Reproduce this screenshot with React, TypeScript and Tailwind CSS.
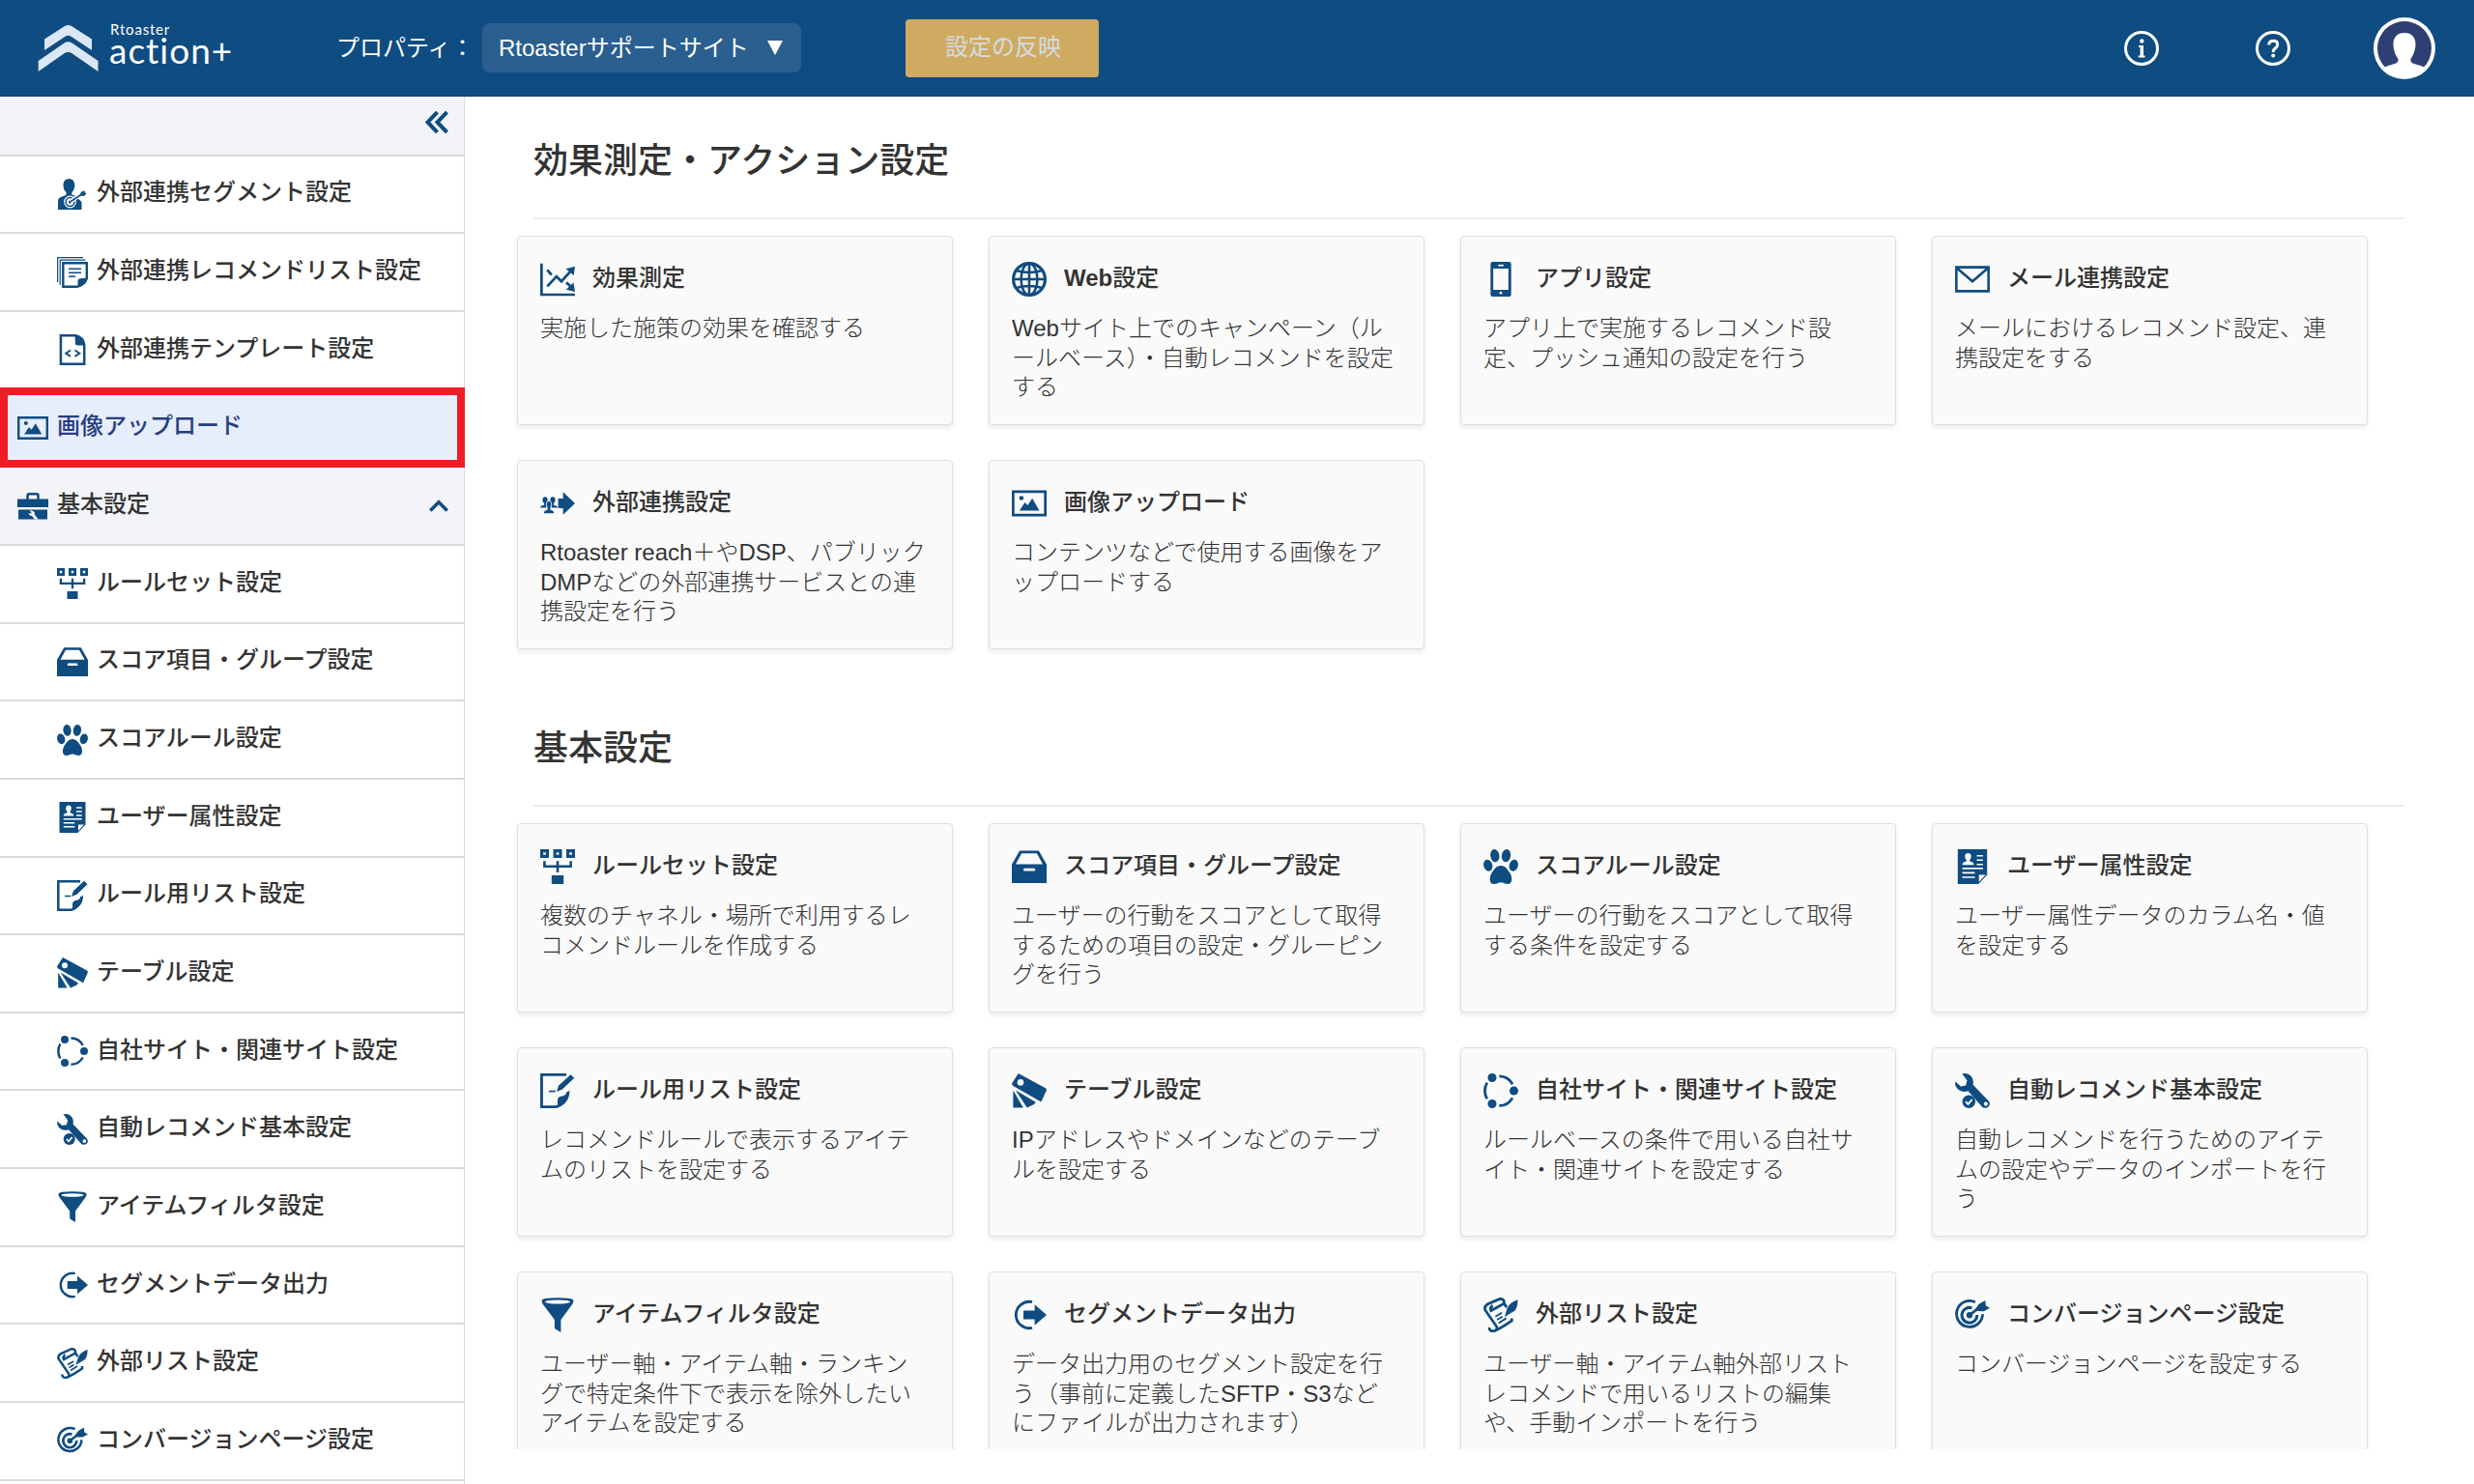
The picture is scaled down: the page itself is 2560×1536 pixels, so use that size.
import type { ReactNode } from 'react'

type IconName =
  | 'segment' | 'docs' | 'template' | 'image' | 'toolbox' | 'ruleset' | 'drawer' | 'paw'
  | 'profile' | 'edit' | 'tags' | 'sites' | 'wrench' | 'funnel' | 'export' | 'scroll'
  | 'target' | 'chart' | 'globe' | 'phone' | 'mail' | 'share'

const icons: Record<IconName, ReactNode> = {
  segment: (
    <>
      <path d="M12.4 0C8.8 0 6.5 2.8 6.5 6.4c0 3.4 1.2 6 3 7.6v2.6c-1 1.3-4 1.5-6.5 2.8C.8 20.5 1 22.5 1 25v7h24.5v-8l-7-6.4c-1.5-.6-2.7-.6-3.2-1.3V14c1.8-1.7 3-4.2 3-7.6C18.3 2.8 16 0 12.4 0z" />
      <circle cx="13.5" cy="24" r="6.4" fill="#fff" />
      <circle cx="13.5" cy="24" r="4.4" fill="none" stroke="currentColor" strokeWidth="1.5" />
      <circle cx="13.5" cy="24" r="1.7" />
      <path d="M13.5 24 27 14.5" stroke="#fff" strokeWidth="4" />
      <path d="M13.5 24 28 14.5" stroke="currentColor" strokeWidth="1.6" />
      <path d="M23.5 17.2 25 13.5 29 12.5 28.8 14.5 30.5 15.2 28 18z" />
    </>
  ),
  docs: (
    <>
      <path d="M.6 26V.6H27M3.2 29V3.2H29.5" fill="none" stroke="currentColor" strokeWidth="1.2" />
      <path d="M6.3 6.3h24.5V22q-2 7-10 8.7H6.3z" fill="none" stroke="currentColor" strokeWidth="2.4" />
      <path d="M21.5 31.5V25q0-2.5 2.5-2.8l7.5-.5q-1.5 7.5-10 9.8z" />
      <path d="M12 12.3h13M12 16.3h13M12 20.3h7" stroke="currentColor" strokeWidth="1.6" />
    </>
  ),
  template: (
    <>
      <path d="M3.9 1.3h15.5Q27 3 28.2 11v19.7H3.9z" fill="none" stroke="currentColor" strokeWidth="2.5" />
      <path d="M18.5.5q8.500 1 10.500 11h-7.500q-3 0-2.600-3z" />
      <path d="M14 16.5 9.2 19.7l4.8 3.2M18.5 16.5l4.8 3.2-4.8 3.2" fill="none" stroke="currentColor" strokeWidth="1.9" />
    </>
  ),
  image: (
    <>
      <path d="M1.2 5.2h29.6v21.6H1.2z" fill="none" stroke="currentColor" strokeWidth="2.4" />
      <circle cx="8.8" cy="11" r="2" />
      <path d="M7 22.6 12 15l2.6 2.7 4.2-6.4 6.5 11.3z" />
    </>
  ),
  toolbox: (
    <>
      <path d="M10.5 9V5q0-1.7 1.7-1.7h7.6q1.7 0 1.7 1.7v4" fill="none" stroke="currentColor" strokeWidth="2.5" />
      <path d="M0 8.5h32V17H0zM1 19.5h30v10H1z" />
      <path d="M12.5 20.5q3-.8 5 1.5.8 1.5.2 2.5l4 5h-4l-2.6-3.600q-3 0-3.600-3l2.600.9.300-1.600z" fill="#f2f4f8" />
    </>
  ),
  ruleset: (
    <>
      <path d="M1.4 1.4h5.2v5.2H1.4zM13.4 1.4h5.2v5.2h-5.2zM25.4 1.4h5.2v5.2h-5.2z" fill="none" stroke="currentColor" strokeWidth="2.8" />
      <path d="M3.9 10.8v5h24.2v-5M16 10.8v10.5" fill="none" stroke="currentColor" strokeWidth="2.3" />
      <path d="M10.5 24h11v8h-11z" />
    </>
  ),
  drawer: (
    <>
      <path fillRule="evenodd" d="M0 14 7.2 1.3h17.6L32 14v17H0zM3.5 13.7h25L23 3.8H9z" />
      <rect x="10.7" y="17.5" width="10.8" height="2.6" rx="1.3" fill="#fff" />
    </>
  ),
  paw: (
    <>
      <ellipse cx="10.5" cy="5.9" rx="4.1" ry="5.9" transform="rotate(-8 10.5 5.9)" />
      <ellipse cx="20.9" cy="5.9" rx="4.1" ry="5.9" transform="rotate(8 20.9 5.9)" />
      <ellipse cx="4.2" cy="14.8" rx="4" ry="5.4" transform="rotate(-16 4.2 14.8)" />
      <ellipse cx="27.8" cy="14.8" rx="4" ry="5.4" transform="rotate(16 27.8 14.8)" />
      <path d="M16 15c-4.500 0-6.500 4-8.500 7S4.800 32 9.500 32c3 0 4-1.600 6.500-1.600S19.500 32 22.500 32c4.700 0 4-7 2-10s-4-7-8.500-7z" />
    </>
  ),
  profile: (
    <>
      <path d="M2.5 0h27v23.5L21.5 32h-19z" />
      <path d="M12 3.5c-3.400 0-3.600 4.200-1.500 6.500v1.200c-2 .6-3.800.8-3.800 3.300h10.600c0-2.500-1.800-2.700-3.800-3.300V10c2.100-2.300 1.900-6.500-1.500-6.500z" fill="#fff" />
      <path d="M20 6h5.7M20 10h5.7M20 14h5.7M6.7 17.7h19M6.7 21.7h11.5M6.7 25.8h11.5" stroke="#fff" strokeWidth="1.5" />
      <path d="M22 30v-6.5h6z" fill="#fff" />
    </>
  ),
  edit: (
    <>
      <path d="M24 1.3H1.3v29.4H15Q24 27 25.5 17" fill="none" stroke="currentColor" strokeWidth="2.5" />
      <path d="M16 31.5v-7q0-2.5 2.5-3.2 6-1 8.5-6.3Q27.5 27 16 31.5z" />
      <path d="M8 16.5h6.5" stroke="currentColor" strokeWidth="1.5" />
      <path d="M14.2 17.8 16.5 11 28 .3 32 4.3 20.5 15.2z" stroke="#fff" strokeWidth="1" />
    </>
  ),
  tags: (
    <>
      <path fillRule="evenodd" d="M6 0 31 13.6Q32.3 14.5 31.7 16L27 26.2 1.2 11.5Q-.2 10.500.2 9zM8 5.3a3 3 0 1 0 0 6 3 3 0 0 0 0-6z" />
      <path d="M1.2 15.5 10.5 31.5H1.2z" />
      <path d="M3.5 15.5 22 26.5 20.5 28.5 14 31.5z" />
    </>
  ),
  sites: (
    <>
      <circle cx="8" cy="4" r="4" />
      <circle cx="28" cy="16" r="4" />
      <circle cx="8" cy="28" r="4" />
      <path d="M14.5 2.5A14 14 0 0 1 26.7 10M26.7 22.5A14 14 0 0 1 14.5 29.7M3.3 8.5A16 16 0 0 0 3.3 23.5" fill="none" stroke="currentColor" strokeWidth="2.5" />
    </>
  ),
  wrench: (
    <>
      <path fillRule="evenodd" d="M6.5.3q6-1 9 3.200 2 3.200 1 7L30.600 25.200q2.400 2.600.4 5.200-2.800 2.600-5.800.6L12 16.300Q3.500 18.500.3 11 0 8.500.3 7.500l5 4.500 4.600-.8 1.200-4.700zM28.300 26.200a1.900 1.900 0 1 0 0 3.800 1.900 1.900 0 0 0 0-3.800z" />
      <circle cx="12.7" cy="26" r="6" />
      <path d="m9.8 26 2.2 2.3 3.7-4.3" fill="none" stroke="#fff" strokeWidth="1.7" />
    </>
  ),
  funnel: (
    <>
      <path d="M1.5 2.7Q2 .3 16 .3t14.500 2.400q.3 1.800-1 3.600L19 20.500V32l-5.800-3.500v-8L2.500 6.300q-1.300-1.800-1-3.600z" />
      <ellipse cx="16" cy="4" rx="11.5" ry="1.8" fill="#fff" />
    </>
  ),
  export: (
    <>
      <path d="M18.7 4.1A12.2 12.2 0 1 0 18.7 27.9" fill="none" stroke="currentColor" strokeWidth="2.5" />
      <path d="M10.7 12H21V6.5L32 16 21 25.5V20H10.7z" />
    </>
  ),
  scroll: (
    <>
      <path d="M5.5 27.5Q5 31 9.5 31 15 29 26 21.5V19M9.5 31Q13.5 30 12 26.5L1.6 11.5Q.5 8 4 6L15 1.2Q19.5 1 19 5.5L7 12Q5.5 9.5 8.5 7.3M19 5.5 21.5 9" fill="none" stroke="currentColor" strokeWidth="2.5" />
      <path d="M11 17.5 17 14M12.5 20.5 17.5 17.5M14 23.5 21 19" stroke="currentColor" strokeWidth="1.6" />
      <path d="M32 1.5Q24 4 21.5 10L19 18.5 29.5 12Q32 8 32 1.5z" stroke="#fff" strokeWidth=".6" />
    </>
  ),
  target: (
    <>
      <path d="M18.6 4.2A12 12 0 1 0 25.4 15.4" fill="none" stroke="currentColor" strokeWidth="2.5" />
      <path d="M15.5 9.6A7 7 0 1 0 20.3 16" fill="none" stroke="currentColor" strokeWidth="2.7" />
      <circle cx="13.3" cy="16.2" r="2.8" />
      <path d="M13.3 16.2 22 9.5" stroke="currentColor" strokeWidth="2.4" />
      <path d="M18.8 10.5 22 6 27.8 2.6 28.4 7.6 32 9.6 26.5 12.6 21 12.4z" />
    </>
  ),
  chart: (
    <>
      <path d="M1.2 1.5v28.7H32" fill="none" stroke="currentColor" strokeWidth="2.4" />
      <path d="M6.5 22.5 15 13.5 19.5 18 29 7.5M6.5 7.5 10.5 12M24 19l5 4.5" fill="none" stroke="currentColor" strokeWidth="2.4" />
      <path d="M23.5 6.5 32 4.2 30.8 12.5zM32 27.5 23.8 25.6 30.6 19z" />
    </>
  ),
  globe: (
    <>
      <circle cx="16" cy="16" r="14.6" fill="none" stroke="currentColor" strokeWidth="2.8" />
      <ellipse cx="16" cy="16" rx="7.5" ry="14.5" fill="none" stroke="currentColor" strokeWidth="2.3" />
      <path d="M16 1v30M1 16h30M4 8q12 3.5 24 0M4 24q12-3.5 24 0" fill="none" stroke="currentColor" strokeWidth="2.3" />
    </>
  ),
  phone: (
    <>
      <path fillRule="evenodd" d="M8.5 0h15Q25.5 0 25.5 2v28q0 2-2 2h-15q-2 0-2-2V2q0-2 2-2zM9 6.3v19.5h14V6.3z" />
      <path d="M13.5 3.3h5" stroke="#fff" strokeWidth="1.5" />
      <circle cx="16" cy="28.6" r="1.2" fill="#fff" />
    </>
  ),
  mail: (
    <path d="M1.2 5h29.6v22H1.2zM1.5 5.5 16 18 30.5 5.5" fill="none" stroke="currentColor" strokeWidth="2.3" />
  ),
  share: (
    <>
      <path d="M16.5 11.5H21V5.5L32 16 21 26.5v-6h-4.5z" />
      <ellipse cx="4.5" cy="12.8" rx="2.3" ry="2.9" />
      <ellipse cx="11.5" cy="12.8" rx="2.3" ry="2.9" />
      <path d="M0 20q0-2 3.5-2.5V14h2v6zM16 20q0-2-3.5-2.5V14h-2v6z" />
      <ellipse cx="8" cy="17" rx="2.5" ry="3.2" stroke="#fafafa" strokeWidth=".7" />
      <path d="M3.4 25q0-2.5 3.3-3v-3h2.6v3q3.3.5 3.3 3z" />
    </>
  ),
}

function Icon({ name, className }: { name: IconName; className: string }) {
  return (
    <svg viewBox="0 0 32 32" fill="currentColor" className={`shrink-0 text-[#0f4c81] ${className}`}>
      {icons[name]}
    </svg>
  )
}

interface MenuItem {
  icon: IconName
  label: string
}

const externalMenu: MenuItem[] = [
  { icon: 'segment', label: '外部連携セグメント設定' },
  { icon: 'docs', label: '外部連携レコメンドリスト設定' },
  { icon: 'template', label: '外部連携テンプレート設定' },
]

const basicMenu: MenuItem[] = [
  { icon: 'ruleset', label: 'ルールセット設定' },
  { icon: 'drawer', label: 'スコア項目・グループ設定' },
  { icon: 'paw', label: 'スコアルール設定' },
  { icon: 'profile', label: 'ユーザー属性設定' },
  { icon: 'edit', label: 'ルール用リスト設定' },
  { icon: 'tags', label: 'テーブル設定' },
  { icon: 'sites', label: '自社サイト・関連サイト設定' },
  { icon: 'wrench', label: '自動レコメンド基本設定' },
  { icon: 'funnel', label: 'アイテムフィルタ設定' },
  { icon: 'export', label: 'セグメントデータ出力' },
  { icon: 'scroll', label: '外部リスト設定' },
  { icon: 'target', label: 'コンバージョンページ設定' },
]

interface CardItem {
  icon: IconName
  title: ReactNode
  lines: string[]
}

const actionCards: CardItem[] = [
  { icon: 'chart', title: '効果測定', lines: ['実施した施策の効果を確認する'] },
  { icon: 'globe', title: <><b>Web</b>設定</>, lines: ['Webサイト上でのキャンペーン（ル', 'ールベース）・自動レコメンドを設定', 'する'] },
  { icon: 'phone', title: 'アプリ設定', lines: ['アプリ上で実施するレコメンド設', '定、プッシュ通知の設定を行う'] },
  { icon: 'mail', title: 'メール連携設定', lines: ['メールにおけるレコメンド設定、連', '携設定をする'] },
  { icon: 'share', title: '外部連携設定', lines: ['Rtoaster reach＋やDSP、パブリック', 'DMPなどの外部連携サービスとの連', '携設定を行う'] },
  { icon: 'image', title: '画像アップロード', lines: ['コンテンツなどで使用する画像をア', 'ップロードする'] },
]

const basicCards: CardItem[] = [
  { icon: 'ruleset', title: 'ルールセット設定', lines: ['複数のチャネル・場所で利用するレ', 'コメンドルールを作成する'] },
  { icon: 'drawer', title: 'スコア項目・グループ設定', lines: ['ユーザーの行動をスコアとして取得', 'するための項目の設定・グルーピン', 'グを行う'] },
  { icon: 'paw', title: 'スコアルール設定', lines: ['ユーザーの行動をスコアとして取得', 'する条件を設定する'] },
  { icon: 'profile', title: 'ユーザー属性設定', lines: ['ユーザー属性データのカラム名・値', 'を設定する'] },
  { icon: 'edit', title: 'ルール用リスト設定', lines: ['レコメンドルールで表示するアイテ', 'ムのリストを設定する'] },
  { icon: 'tags', title: 'テーブル設定', lines: ['IPアドレスやドメインなどのテーブ', 'ルを設定する'] },
  { icon: 'sites', title: '自社サイト・関連サイト設定', lines: ['ルールベースの条件で用いる自社サ', 'イト・関連サイトを設定する'] },
  { icon: 'wrench', title: '自動レコメンド基本設定', lines: ['自動レコメンドを行うためのアイテ', 'ムの設定やデータのインポートを行', 'う'] },
  { icon: 'funnel', title: 'アイテムフィルタ設定', lines: ['ユーザー軸・アイテム軸・ランキン', 'グで特定条件下で表示を除外したい', 'アイテムを設定する'] },
  { icon: 'export', title: 'セグメントデータ出力', lines: ['データ出力用のセグメント設定を行', 'う（事前に定義したSFTP・S3など', 'にファイルが出力されます）'] },
  { icon: 'scroll', title: '外部リスト設定', lines: ['ユーザー軸・アイテム軸外部リスト', 'レコメンドで用いるリストの編集', 'や、手動インポートを行う'] },
  { icon: 'target', title: 'コンバージョンページ設定', lines: ['コンバージョンページを設定する'] },
]

function Header() {
  return (
    <header className="h-[100px] shrink-0 flex items-center bg-[#0f4c81] border-b border-[#0b3f70] text-white">
      <div className="w-[348px] flex items-center pl-[39px]">
        <svg viewBox="0 0 64 50" className="w-16 h-[50px] shrink-0" fill="#dbe7f4">
          <path d="M7 15.5 28 2q3.500-2 7 0l21 13.500V27L34.500 12.700q-3-1.800-6 0L7 27z" />
          <path d="M.7 38 27.500 19.500q4-2.500 8 0L62.500 38v11L35.500 30.300q-4-2.500-8 0L.7 49z" />
        </svg>
        <div className="pl-[10px] pb-[9px] font-['Lato']">
          <div className="pl-[1px] text-[15px] leading-[14px] tracking-[0.8px]">Rtoaster</div>
          <div className="text-[37px] leading-[30px] tracking-[1px]">action+</div>
        </div>
      </div>
      <span className="w-[151px] text-2xl">プロパティ：</span>
      <div className="w-[330px] h-[51px] flex items-center justify-between rounded-lg bg-[#2a5f90] pl-[17px] pr-[19px] text-2xl">
        <span>Rtoasterサポートサイト</span>
        <svg viewBox="0 0 16 15" className="w-4 h-[15px]" fill="currentColor">
          <path d="M0 0h16L8 15z" />
        </svg>
      </div>
      <button className="ml-[108px] w-[200px] h-[60px] rounded bg-[#cfab61] pb-[2px] pl-[2px] text-[#d3dce4] text-2xl">設定の反映</button>
      <div className="ml-auto flex items-center pr-10">
        <svg viewBox="0 0 36 36" className="w-9 h-9" fill="currentColor">
          <circle cx="18" cy="18" r="16.5" fill="none" stroke="currentColor" strokeWidth="3" />
          <circle cx="18.3" cy="10.5" r="2.2" />
          <path d="M15 15h5v10.5h1.5v2h-6.800v-2h1.900V17H15z" />
        </svg>
        <svg viewBox="0 0 36 36" className="ml-[100px] w-9 h-9" fill="none" stroke="currentColor" strokeWidth="3">
          <circle cx="18" cy="18" r="16.5" />
          <path d="M13.8 14.5q0-4.300 4.500-4.300 4.400 0 4.400 3.800 0 2.300-2.400 4-2 1.500-2 3.300v.8" />
          <circle cx="18.2" cy="25.6" r="2" fill="currentColor" stroke="none" />
        </svg>
        <svg viewBox="0 0 64 64" className="ml-[86px] w-16 h-16">
          <circle cx="32" cy="32" r="32" fill="#fff" />
          <circle cx="32" cy="32" r="28" fill="#2e3f74" />
          <path d="M32 16c-7.500 0-11.500 4.800-11.500 11.500 0 7 2.500 11.500 5 15.500.8 5-5 5-9 6.500-2.500 1-4 1.500-5 2.200A28.500 28.500 0 0 0 52.500 51.700c-1-.7-2.500-1.200-5-2.200-4-1.500-9.800-1.500-9-6.500 2.500-4 5-8.500 5-15.500C43.500 20.800 39.500 16 32 16z" fill="#fff" />
        </svg>
      </div>
    </header>
  )
}

function SubMenu({ items }: { items: MenuItem[] }) {
  return items.map((item) => (
    <li key={item.label} className="h-[80.67px] flex items-center border-b-2 border-[#dadada] bg-white pl-[59px]">
      <Icon name={item.icon} className="w-8 h-8" />
      <span className="pl-[9px] pb-[3px]">{item.label}</span>
    </li>
  ))
}

function Sidebar() {
  return (
    <nav className="w-[481px] shrink-0 border-r border-[#d3dbe9] bg-white">
      <div className="h-[61.6px] flex items-start justify-end border-b-2 border-[#dadada] bg-[#f2f4f8] pt-[15px] pr-4">
        <svg viewBox="0 0 24 23" className="w-6 h-[23px]" fill="none" stroke="#0f4c81" strokeWidth="4">
          <path d="M12.5 1 2.5 11.5l10 10.5M22.5 1l-10 10.5 10 10.5" />
        </svg>
      </div>
      <ul className="text-2xl font-medium text-[#333] whitespace-nowrap">
        <SubMenu items={externalMenu} />
        <li className="relative h-[80.67px] flex items-center bg-[#e6edfb] pl-[18px] pb-[2px] text-[#263e80]">
          <Icon name="image" className="w-8 h-8" />
          <span className="pl-[9px] pb-1">画像アップロード</span>
          <span className="absolute -top-[3px] left-0 w-[481px] h-[83px] border-8 border-[#ee1c25]" />
        </li>
        <li className="h-[80.67px] flex items-center border-b-2 border-[#dadada] bg-[#f2f4f8] pl-[18px] pr-4">
          <Icon name="toolbox" className="w-8 h-8" />
          <span className="pl-[9px] pb-[3px]">基本設定</span>
          <svg viewBox="0 0 20 13" className="ml-auto w-5 h-[13px]" fill="none" stroke="#0f4c81" strokeWidth="3.6">
            <path d="M1.3 11.5 10 2.7l8.7 8.8" />
          </svg>
        </li>
        <SubMenu items={basicMenu} />
      </ul>
    </nav>
  )
}

function Card({ icon, title, lines }: CardItem) {
  return (
    <div className="h-[196px] rounded-[4px] border border-[#dfdfdf] bg-[#fafafa] px-[23px] pt-[26px] shadow-[0_3px_5px_rgba(0,0,0,0.08)]">
      <div className="h-9 flex items-center">
        <Icon name={icon} className="w-9 h-9" />
        <h3 className="pl-[18px] pb-[2px] font-medium">{title}</h3>
      </div>
      <p className="mt-[18px] font-light leading-[30.6px] whitespace-nowrap">
        {lines.map((line) => (
          <span key={line} className="block">{line}</span>
        ))}
      </p>
    </div>
  )
}

function Section({ title, cards }: { title: string; cards: CardItem[] }) {
  return (
    <section>
      <h2 className="ml-[17px] h-[98px] border-b-2 border-[#ececec] text-4xl leading-[76px] font-medium">{title}</h2>
      <div className="mt-[17px] grid grid-cols-[repeat(4,451px)] gap-x-[37px] gap-y-9">
        {cards.map((card) => (
          <Card key={card.icon} {...card} />
        ))}
      </div>
    </section>
  )
}

export default function App() {
  return (
    <div className="w-[2560px] h-[1536px] flex flex-col overflow-hidden bg-white font-['Liberation_Sans','Noto_Sans_CJK_JP',sans-serif]">
      <Header />
      <div className="flex-1 min-h-0 flex">
        <Sidebar />
        <main className="h-[1400px] flex-1 flex flex-col gap-[65px] overflow-hidden pt-[29px] pl-[54px] pr-[72px] text-2xl text-[#333]">
          <Section title="効果測定・アクション設定" cards={actionCards} />
          <Section title="基本設定" cards={basicCards} />
        </main>
      </div>
    </div>
  )
}
